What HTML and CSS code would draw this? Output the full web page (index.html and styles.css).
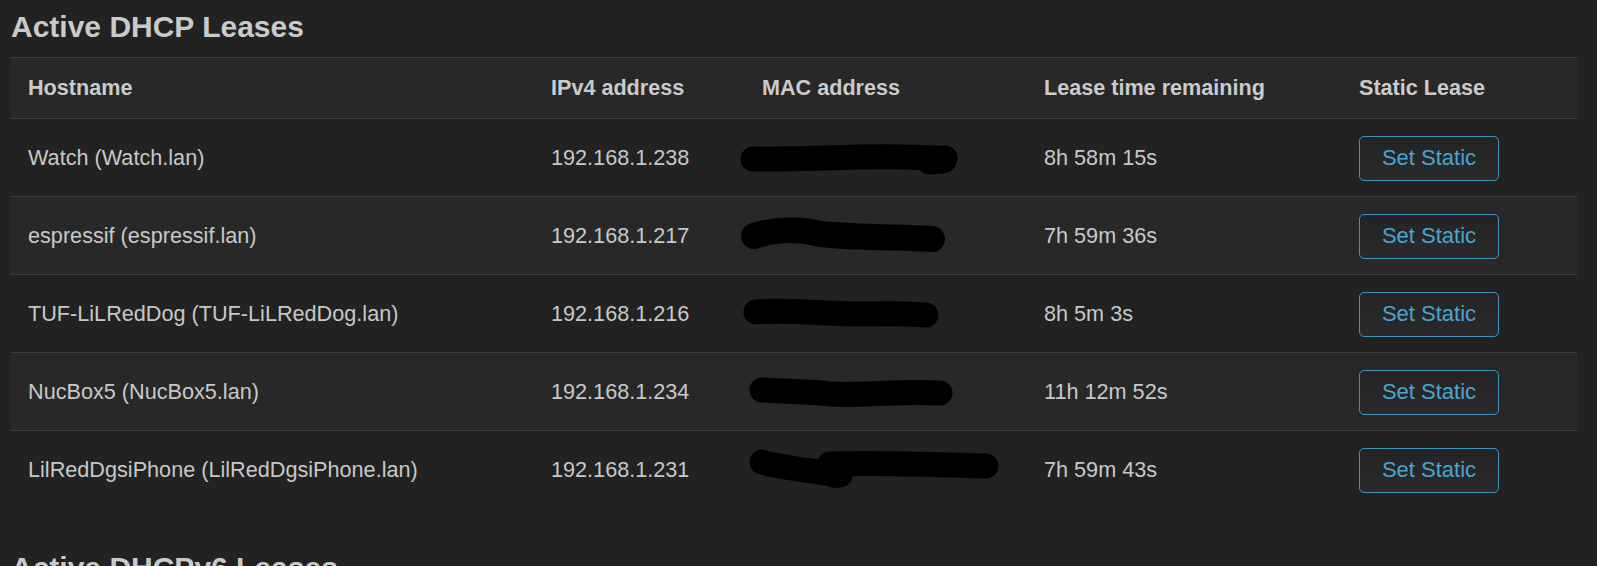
FILE: index.html
```html
<!DOCTYPE html>
<html lang="en">
<head>
<meta charset="utf-8">
<title>Active DHCP Leases</title>
<link rel="stylesheet" href="styles.css">
</head>
<body>
<div class="page">
  <h2 class="section-title">Active DHCP Leases</h2>
  <table class="leases">
    <colgroup>
      <col class="c-host"><col class="c-ip"><col class="c-mac"><col class="c-time"><col class="c-static">
    </colgroup>
    <thead>
      <tr>
        <th>Hostname</th>
        <th>IPv4 address</th>
        <th>MAC address</th>
        <th>Lease time remaining</th>
        <th>Static Lease</th>
      </tr>
    </thead>
    <tbody>
      <tr>
        <td>Watch (Watch.lan)</td>
        <td>192.168.1.238</td>
        <td class="mac"><svg class="redact" width="240" height="40" viewBox="0 0 240 40"><path d="M13 21 C60 22 110 18 160 19 C185 19 195 21 205 20" /><path d="M190 23 L203 22" stroke-width="27"/></svg></td>
        <td>8h 58m 15s</td>
        <td><button class="btn-static">Set Static</button></td>
      </tr>
      <tr>
        <td>espressif (espressif.lan)</td>
        <td>192.168.1.217</td>
        <td class="mac"><svg class="redact" width="240" height="40" viewBox="0 0 240 40"><path d="M14 20 C40 12 60 13 80 18 C120 22 160 21 192 23" stroke-width="26"/></svg></td>
        <td>7h 59m 36s</td>
        <td><button class="btn-static">Set Static</button></td>
      </tr>
      <tr>
        <td>TUF-LiLRedDog (TUF-LiLRedDog.lan)</td>
        <td>192.168.1.216</td>
        <td class="mac"><svg class="redact" width="240" height="40" viewBox="0 0 240 40"><path d="M16 18 C50 15 90 21 130 20 C155 19 170 20 186 21" /></svg></td>
        <td>8h 5m 3s</td>
        <td><button class="btn-static">Set Static</button></td>
      </tr>
      <tr>
        <td>NucBox5 (NucBox5.lan)</td>
        <td>192.168.1.234</td>
        <td class="mac"><svg class="redact" width="240" height="40" viewBox="0 0 240 40"><path d="M22 18 C50 20 70 19 90 22 C120 24 160 19 200 21" /></svg></td>
        <td>11h 12m 52s</td>
        <td><button class="btn-static">Set Static</button></td>
      </tr>
      <tr>
        <td>LilRedDgsiPhone (LilRedDgsiPhone.lan)</td>
        <td>192.168.1.231</td>
        <td class="mac"><svg class="redact" width="280" height="44" viewBox="0 0 280 44"><path d="M22 14 C40 20 70 22 100 27" /><path d="M90 16 C140 14 200 17 246 18" /><path d="M88 24 L95 27" stroke-width="26"/></svg></td>
        <td>7h 59m 43s</td>
        <td><button class="btn-static">Set Static</button></td>
      </tr>
    </tbody>
  </table>
  <h2 class="section-title next">Active DHCPv6 Leases</h2>
</div>
</body>
</html>
```
FILE: styles.css
```css
html, body {
  margin: 0;
  padding: 0;
  background: #222222;
}

body {
  font-family: "Liberation Sans", Arial, sans-serif;
  color: #cccccc;
  height: 566px;
  overflow: hidden;
}

.page {
  padding: 9px 20px 0 10px;
}

.section-title {
  margin: 0 0 12px 1px;
  font-size: 30px;
  line-height: 36px;
  font-weight: bold;
  color: #cacaca;
}

.section-title.next {
  margin-top: 42px;
}

.leases {
  width: 1567px;
  table-layout: fixed;
  border-collapse: separate;
  border-spacing: 0;
  font-size: 21.65px;
}

.c-host { width: 523px; }
.c-ip { width: 211px; }
.c-mac { width: 282px; }
.c-time { width: 315px; }
.c-static { width: 236px; }

.leases th,
.leases td {
  text-align: left;
  vertical-align: middle;
  padding: 0 18px;
  border-top: 1px solid #3c3c3c;
  white-space: nowrap;
}

.leases th {
  height: 60px;
  font-weight: bold;
  font-size: 21.6px;
  color: #cbcbcb;
  background: #282828;
}

.leases td {
  height: 76px;
  padding-top: 1px;
  color: #c8c8c8;
}

.leases tbody tr:nth-child(even) td {
  background: #282828;
}

.leases tbody tr:nth-child(odd) td {
  background: #222222;
}

.mac {
  overflow: visible;
}

.redact {
  display: block;
  margin-left: -22px;
  overflow: visible;
  fill: none;
  stroke: #000000;
  stroke-width: 25;
  stroke-linecap: round;
  stroke-linejoin: round;
}

.btn-static {
  display: block;
  width: 140px;
  height: 45px;
  padding: 0;
  border: 1px solid #3a96bd;
  border-radius: 5px;
  background: linear-gradient(#242424, #2a2a2a);
  color: #49a5d2;
  font-family: "Liberation Sans", Arial, sans-serif;
  font-size: 22px;
  cursor: pointer;
}
```
